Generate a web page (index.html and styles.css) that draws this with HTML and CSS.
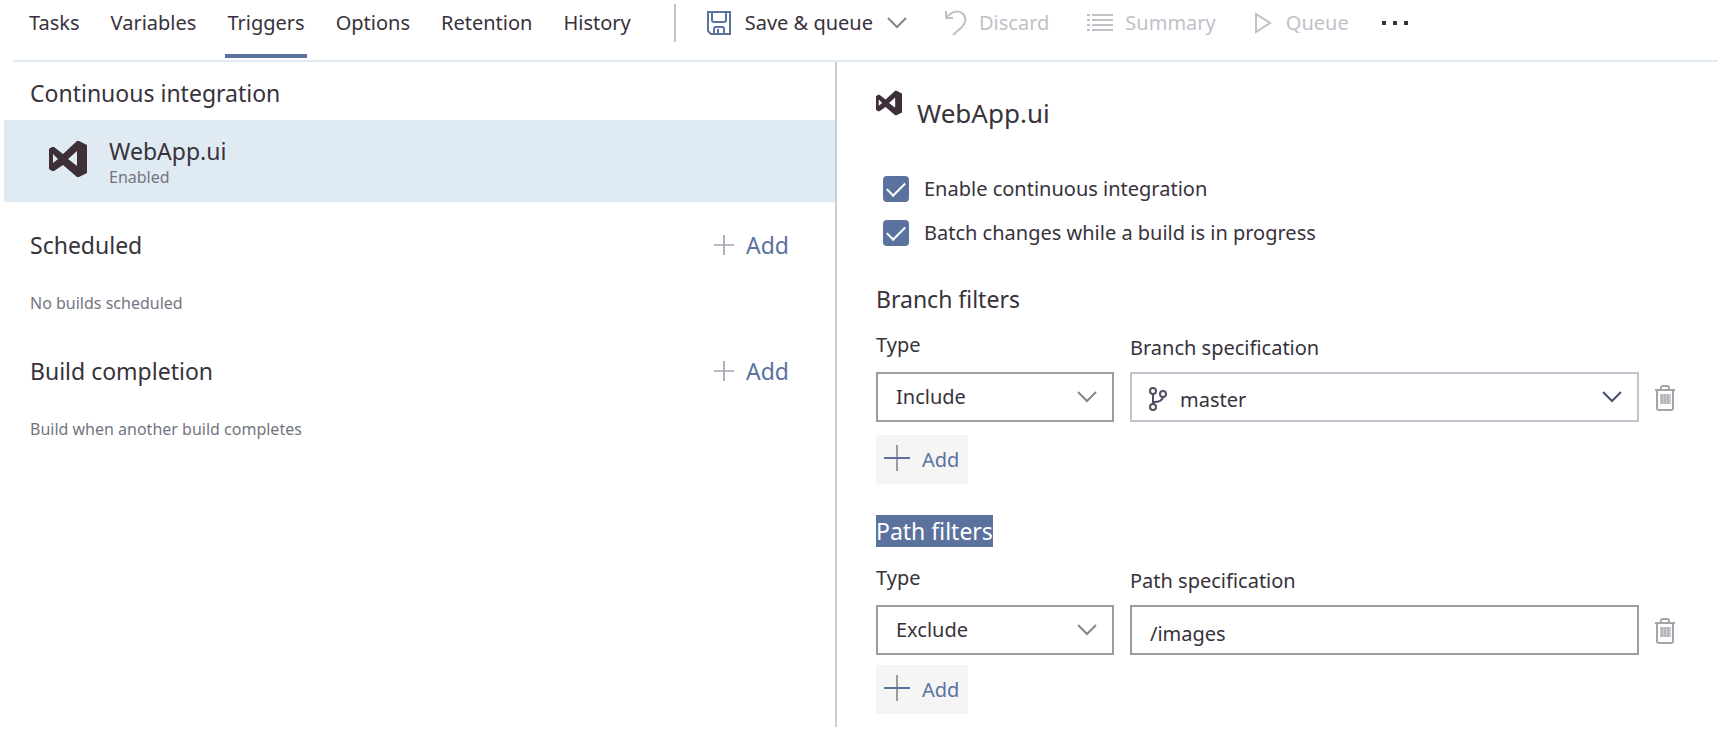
FILE: index.html
```html
<!DOCTYPE html>
<html lang="en">
<head>
<meta charset="utf-8">
<title>WebApp.ui - Triggers</title>
<link rel="stylesheet" href="styles.css">
</head>
<body>
<svg class="defs" aria-hidden="true">
  <symbol id="vs" viewBox="0 0 38 38"><path fill-rule="evenodd" d="M28 1 30 1 38 5V33L30 37 28 37 14 25 5 31 3 31 0 29V9L3 7 5 7 14 14ZM28 11 19 19 28 26ZM4 14V23L9 19Z"/></symbol>
  <symbol id="chevron" viewBox="0 0 20 12"><path d="M1 1 10 10 19 1" fill="none" stroke="currentColor" stroke-width="2"/></symbol>
  <symbol id="plus" viewBox="0 0 26 26"><path d="M13 0V26" stroke="#9b9ca3" stroke-width="2"/><path d="M0 13H26" stroke="currentColor" stroke-width="2"/></symbol>
  <symbol id="trash" viewBox="0 0 20 26"><path d="M6 4V3Q6 1 8 1H12Q14 1 14 3V4M0 5H20M2 5V23Q2 25 4 25H16Q18 25 18 23V5" fill="none" stroke="currentColor" stroke-width="2"/><path d="M5 9H16V19H5Z" fill="#c9cacf"/><path d="M7 9V19M10 9V19M13 9V19" stroke="currentColor"/></symbol>
</svg>

<header class="topbar">
  <nav class="tabs" aria-label="Build definition">
    <a class="tab" href="#">Tasks</a>
    <a class="tab" href="#">Variables</a>
    <a class="tab tab-active" href="#" aria-current="page">Triggers</a>
    <a class="tab" href="#">Options</a>
    <a class="tab" href="#">Retention</a>
    <a class="tab" href="#">History</a>
  </nav>
  <div class="toolbar">
    <button class="tool tool-save" type="button">
      <svg class="icon-save" viewBox="0 0 24 24" fill="none" stroke="#5b729f" stroke-width="2"><path d="M1 1H23V23H4L1 20ZM5 1V9Q5 11 7 11H17Q19 11 19 9V1M7 23V18Q7 16 9 16H15Q17 16 17 18V23M11 18V23"/></svg>
      <span>Save &amp; queue</span>
      <svg class="chev"><use href="#chevron"/></svg>
    </button>
    <button class="tool" type="button" disabled>
      <svg class="icon-undo" viewBox="0 0 22 26" fill="none" stroke="currentColor" stroke-width="2"><path d="M1 1V8H8M1 8C6 2 12 0 17 3C22 7 21 13 17 17L8 25"/></svg>
      <span>Discard</span>
    </button>
    <button class="tool" type="button" disabled>
      <svg class="icon-list" viewBox="0 0 26 20" fill="none" stroke="currentColor" stroke-width="2"><path d="M0 2H3M5 2H26M0 7H3M5 7H26M0 12H3M5 12H26M0 17H3M5 17H26"/></svg>
      <span>Summary</span>
    </button>
    <button class="tool tool-queue" type="button" disabled>
      <svg class="icon-play" viewBox="0 0 18 22" fill="none" stroke="currentColor" stroke-width="2"><path d="M2 2V20L16 11Z"/></svg>
      <span>Queue</span>
    </button>
    <button class="tool tool-more" type="button" aria-label="More actions">
      <svg class="icon-more" viewBox="0 0 26 4"><path d="M0 0H4V4H0ZM11 0H15V4H11ZM22 0H26V4H22Z" fill="#33313c"/></svg>
    </button>
  </div>
</header>

<main class="content">
  <section class="list">
    <h2 class="heading heading-first">Continuous integration</h2>
    <a class="repo" href="#">
      <svg class="repo-logo"><use href="#vs"/></svg>
      <span class="repo-text">
        <span class="repo-name">WebApp.ui</span>
        <span class="small">Enabled</span>
      </span>
    </a>
    <div class="group">
      <div class="group-head">
        <h2 class="heading">Scheduled</h2>
        <button class="add-link" type="button"><svg class="plus-small"><use href="#plus"/></svg>Add</button>
      </div>
      <p class="small">No builds scheduled</p>
    </div>
    <div class="group">
      <div class="group-head">
        <h2 class="heading">Build completion</h2>
        <button class="add-link" type="button"><svg class="plus-small"><use href="#plus"/></svg>Add</button>
      </div>
      <p class="small">Build when another build completes</p>
    </div>
  </section>

  <section class="details">
    <div class="title">
      <svg class="title-logo"><use href="#vs"/></svg>
      <h1 class="title-text">WebApp.ui</h1>
    </div>
    <div class="checks">
      <label class="check"><input class="box" type="checkbox" checked>Enable continuous integration</label>
      <label class="check"><input class="box" type="checkbox" checked>Batch changes while a build is in progress</label>
    </div>

    <h2 class="heading filter-heading">Branch filters</h2>
    <div class="filter">
      <label class="label" for="branch-type">Type</label>
      <label class="label label-spec" for="branch-spec">Branch specification</label>
      <div class="field">
        <select class="control" id="branch-type"><option>Include</option><option>Exclude</option></select>
        <svg class="chev field-chev"><use href="#chevron"/></svg>
      </div>
      <div class="field">
        <select class="control control-spec control-branch" id="branch-spec"><option>master</option></select>
        <svg class="icon-branch" viewBox="0 0 18 24" fill="none" stroke="#4f5068" stroke-width="2"><circle cx="4" cy="4" r="3"/><circle cx="4" cy="20" r="3"/><circle cx="14" cy="7" r="3"/><path d="M4 7V17M14 10Q13 15 5 15"/></svg>
        <svg class="chev field-chev chev-dark"><use href="#chevron"/></svg>
      </div>
      <button class="delete" type="button" aria-label="Delete branch filter"><svg class="icon-trash"><use href="#trash"/></svg></button>
    </div>
    <button class="add-box" type="button"><svg class="plus-large"><use href="#plus"/></svg>Add</button>

    <h2 class="heading filter-heading path-heading"><mark class="selected">Path filters</mark></h2>
    <div class="filter">
      <label class="label" for="path-type">Type</label>
      <label class="label label-spec" for="path-spec">Path specification</label>
      <div class="field">
        <select class="control" id="path-type"><option>Exclude</option><option>Include</option></select>
        <svg class="chev field-chev"><use href="#chevron"/></svg>
      </div>
      <div class="field">
        <input class="control control-spec" id="path-spec" type="text" value="/images">
      </div>
      <button class="delete" type="button" aria-label="Delete path filter"><svg class="icon-trash"><use href="#trash"/></svg></button>
    </div>
    <button class="add-box add-box-path" type="button"><svg class="plus-large"><use href="#plus"/></svg>Add</button>
  </section>
</main>
</body>
</html>
```

FILE: styles.css
```css
* { box-sizing: border-box; }

body {
  margin: 0;
  min-height: 100vh;
  display: flex;
  flex-direction: column;
  background: #fff;
  color: #37323c;
  font: 20px/28px "Noto Sans", "Open Sans", sans-serif;
}

button, input, select { font: inherit; color: inherit; }
button { padding: 0; border: 0; background: none; }
a { color: inherit; text-decoration: none; }
h1, h2, p { margin: 0; font-weight: 400; }
svg { flex: none; display: block; }
.defs { position: absolute; width: 0; height: 0; }

.topbar {
  display: flex;
  height: 62px;
  margin: 0 7px 0 13px;
  border-bottom: 2px solid #dfe9f2;
}
.tabs { display: flex; gap: 27px; padding-left: 14px; }
.tab { height: 58px; padding: 9px 2px 0; border-bottom: 4px solid transparent; }
.tab-active { border-color: #5b729f; }

.toolbar {
  display: flex;
  align-items: center;
  gap: 38px;
  height: 38px;
  margin: 4px 0 0 41px;
  padding-left: 31px;
  border-left: 2px solid #c3c5cc;
}
.tool { display: flex; align-items: center; gap: 12px; }
.tool:disabled { color: #c0c1c8; }
.tool-save { gap: 14px; }
.icon-save { width: 24px; height: 24px; }
.icon-undo { width: 22px; height: 26px; }
.icon-list { width: 26px; height: 20px; }
.icon-play { width: 18px; height: 22px; }
.icon-more { width: 26px; height: 4px; }
.tool-queue { gap: 14px; }
.tool-more { margin-left: -5px; }
.chev { width: 20px; height: 12px; color: #85858d; }

.content {
  flex: 1;
  display: grid;
  grid-template-columns: 837fr 888fr;
  padding-bottom: 7px;
}

.list { border-right: 2px solid #c9ced8; }
.heading { font-size: 23px; line-height: 32px; }
.heading-first { padding: 15px 30px 11px; }
.small { color: #74757f; font-size: 16px; line-height: 20px; }
.repo {
  display: flex;
  align-items: center;
  gap: 22px;
  height: 82px;
  margin-left: 4px;
  padding-left: 45px;
  background: #e0eaf3;
}
.repo-logo { width: 38px; height: 38px; margin-bottom: 4px; fill: #3d3038; }
.repo-text { display: flex; flex-direction: column; }
.repo-name { font-size: 23px; line-height: 32px; }
.group { padding: 27px 46px 0 30px; }
.group-head { display: flex; justify-content: space-between; margin-bottom: 32px; }
.group + .group { padding-top: 42px; }
.add-link { display: flex; align-items: center; gap: 12px; color: #5b729f; font-size: 23px; line-height: 32px; }
.plus-small { width: 20px; height: 20px; color: #a5a8b3; }

.details { padding: 28px 50px 0 39px; }
.title { display: flex; gap: 15px; }
.title-logo { width: 26px; height: 26px; fill: #3d3038; }
.title-text { padding-top: 5px; font-size: 26px; line-height: 36px; }
.checks { display: grid; gap: 16px; padding: 44px 7px 0; }
.check { display: flex; align-items: center; gap: 15px; }
.box {
  appearance: none;
  width: 26px;
  height: 26px;
  margin: 0;
  border-radius: 4px;
  background: #5b729f;
  display: grid;
  place-items: center;
}
.box:checked::before {
  content: "";
  width: 16px;
  height: 8px;
  margin-bottom: 4px;
  border: solid #fff;
  border-width: 0 0 2px 2px;
  transform: rotate(-45deg);
}

.filter-heading { margin-top: 36px; }
.filter {
  display: grid;
  grid-template-columns: 238px 1fr 20px;
  column-gap: 16px;
  margin-top: 16px;
}
.label { height: 41px; }
.label-spec { grid-column: 2 / 4; padding-top: 3px; }
.field { position: relative; }
.control {
  appearance: none;
  display: block;
  width: 100%;
  height: 50px;
  padding: 0 18px;
  border: 2px solid #9f9b9d;
  border-radius: 0;
  background: #fff;
}
.control-spec { padding-top: 6px; }
.control-branch { padding-left: 48px; border-color: #c1c4cd; }
.field-chev { position: absolute; right: 17px; top: 19px; pointer-events: none; }
.chev-dark { color: #4a506b; }
.icon-branch { position: absolute; left: 19px; top: 15px; width: 18px; height: 24px; pointer-events: none; }
.delete { display: grid; place-items: start; padding-top: 13px; color: #a3a3a9; }
.icon-trash { width: 20px; height: 26px; }
.label ~ .delete { margin: 0; }
.add-box {
  display: flex;
  align-items: center;
  gap: 12px;
  height: 49px;
  margin-top: 13px;
  padding: 0 9px 0 8px;
  background: #f5f5f5;
  color: #5b729f;
}
.plus-large { width: 26px; height: 26px; margin-bottom: 4px; }
.path-heading { margin-top: 31px; }
.path-heading + .filter { margin-top: 17px; }
.add-box-path { margin-top: 10px; }
.selected { display: inline-block; background: #5b729f; color: #fff; }
```
